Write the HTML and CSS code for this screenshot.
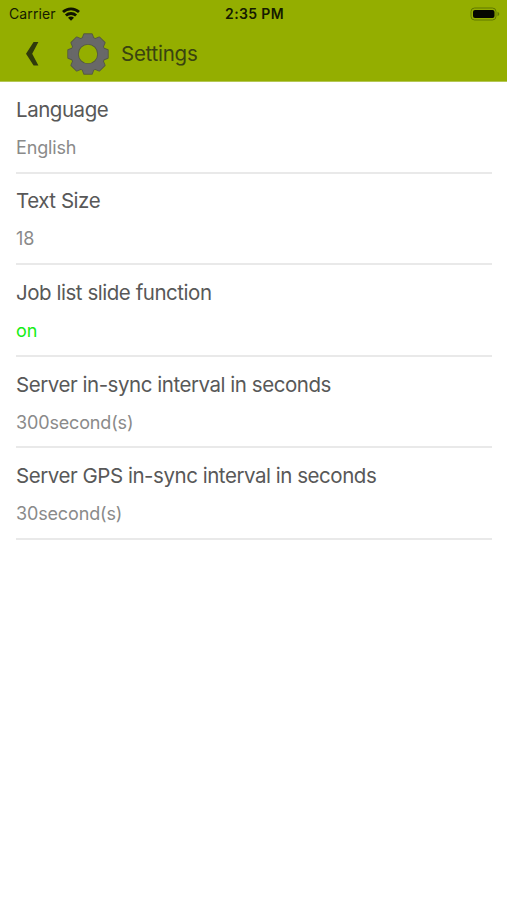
FILE: index.html
```html
<!DOCTYPE html>
<html lang="en">
<head>
<meta charset="utf-8">
<title>Settings</title>
<link rel="stylesheet" href="styles.css">
</head>
<body>
<header class="header">
  <div class="status">
    <div class="status-left">
      <span class="carrier">Carrier</span>
      <svg class="wifi" width="18" height="14" viewBox="0 0 18 14">
        <g fill="none" stroke="#101500" stroke-width="2.8">
          <path d="M1 5C5.4.8 12.6.8 17 5"/>
          <path d="M3.9 8.6C6.8 5.8 11.2 5.8 14.1 8.6"/>
        </g>
        <path d="M6 10.7C7.7 9.2 10.3 9.2 12 10.7L9 13.7Z" fill="#101500"/>
      </svg>
    </div>
    <span class="time">2:35 PM</span>
    <svg class="battery" width="30" height="14" viewBox="0 0 30 14">
      <rect x="1" y="1" width="25" height="12" rx="3.6" fill="none" stroke="#607800"/>
      <rect x="3" y="3" width="21.5" height="8" rx="2" fill="#050700"/>
      <path d="M27.5 4.8Q29.3 5.5 29.3 7T27.5 9.2Z" fill="#607800"/>
    </svg>
  </div>
  <div class="nav">
    <svg class="back" width="14" height="24" viewBox="0 0 14 24">
      <path d="M8.6 0H13.4L7.2 11.8L13.4 23.5H8.6L1 11.8Z" fill="#303a0c"/>
    </svg>
    <svg class="gear" width="44" height="44" viewBox="-22 -22 44 44">
      <defs>
        <path id="tooth" d="M-5.8-15L-3.8-19.8H3.8L5.8-15Z"/>
        <g id="teeth">
          <use href="#tooth"/><use href="#tooth" transform="rotate(45)"/>
          <use href="#tooth" transform="rotate(90)"/><use href="#tooth" transform="rotate(135)"/>
          <use href="#tooth" transform="rotate(180)"/><use href="#tooth" transform="rotate(225)"/>
          <use href="#tooth" transform="rotate(270)"/><use href="#tooth" transform="rotate(315)"/>
        </g>
      </defs>
      <g fill="#555a40" stroke="#555a40" stroke-width="1.8" stroke-linejoin="round"><use href="#teeth"/></g>
      <circle r="13.3" fill="none" stroke="#555a40" stroke-width="8.2"/>
      <use href="#teeth" fill="#686868"/>
      <circle r="13.4" fill="none" stroke="#686868" stroke-width="6.6"/>
    </svg>
    <h1 class="title">Settings</h1>
  </div>
</header>
<main class="list">
  <section class="row"><h2 class="label">Language</h2><p class="value">English</p></section>
  <section class="row"><h2 class="label">Text Size</h2><p class="value">18</p></section>
  <section class="row"><h2 class="label">Job list slide function</h2><p class="value on">on</p></section>
  <section class="row"><h2 class="label">Server in-sync interval in seconds</h2><p class="value">300second(s)</p></section>
  <section class="row"><h2 class="label">Server GPS in-sync interval in seconds</h2><p class="value">30second(s)</p></section>
</main>
</body>
</html>
```
FILE: styles.css
```css
* { box-sizing: border-box; }
body { margin: 0; background: #fff; font-family: Inter, "Liberation Sans", sans-serif; }
h1, h2, p { margin: 0; font-weight: 400; white-space: nowrap; }
svg { display: block; }
.header { height: 82px; background: #94ae00; border-bottom: 1px solid #b4c755; }
.status { height: 27px; display: grid; grid-template-columns: 1fr auto 1fr; align-items: center; padding: 0 7px 0 9px; color: #151b00; }
.status-left { display: flex; align-items: center; gap: 6px; }
.carrier { font-size: 14px; line-height: 27px; letter-spacing: .1px; }
.time { font-size: 14px; font-weight: 600; line-height: 27px; letter-spacing: .35px; }
.battery { justify-self: end; }
.nav { height: 53px; display: flex; align-items: center; padding-left: 25px; }
.gear { margin-left: 27px; }
.title { margin-left: 11px; font-size: 20.5px; color: #394310; letter-spacing: -.25px; }
.list { padding: 0 15px 0 16px; }
.row { height: 91.6px; padding-top: 12.8px; border-bottom: 2px solid #e9e9e9; }
.label { font-size: 20.5px; line-height: 30px; color: #585858; letter-spacing: -.46px; }
.value { margin-top: 10px; font-size: 18px; line-height: 26px; color: #8a8a8a; letter-spacing: -.15px; }
.on { color: #16ed16; }
```
